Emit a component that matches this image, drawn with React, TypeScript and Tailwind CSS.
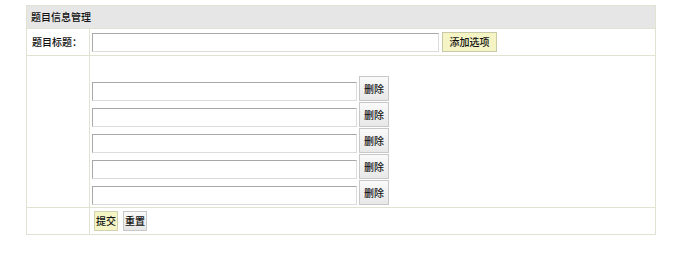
const font = { fontFamily: '"Noto Sans CJK SC", "Noto Sans", sans-serif' }

const inputCls =
  "h-[19px] border border-t-[#a8a8a8] border-l-[#a8a8a8] border-r-[#dcdcdc] border-b-[#dcdcdc] bg-white outline-none"

export default function App() {
  const options = [0, 1, 2, 3, 4]

  return (
    <div className="h-[260px] w-[692px] bg-white pt-[5px] pl-[26px] text-[10px] font-medium leading-none text-[#111]" style={font}>
      <table className="w-[630px] border-collapse">
        <tbody>
          <tr className="h-[23px] bg-[#e6e6e6]">
            <td colSpan={2} className="border border-[#e2e2d2] pl-[4px] align-middle">
              题目信息管理
            </td>
          </tr>
          <tr className="h-[27px]">
            <td className="w-[63px] border border-[#e2e2d2] pr-[7px] text-right align-middle">题目标题：</td>
            <td className="border border-[#e2e2d2] pl-[2px] align-middle">
              <div className="flex items-center gap-[3px]">
                <input className={`${inputCls} w-[347px]`} />
                <button className="h-[20px] w-[55px] border border-[#c9c9a6] bg-[#f4f4c4] text-[10px]">添加选项</button>
              </div>
            </td>
          </tr>
          <tr className="h-[152px]">
            <td className="border border-[#e2e2d2]"></td>
            <td className="border border-[#e2e2d2] pl-[2px] pt-[20px] pb-[2px] align-top">
              <div className="flex flex-col gap-[1px]">
                {options.map(i => (
                  <div key={i} className="flex items-end gap-[2px]">
                    <input className={`${inputCls} w-[265px]`} />
                    <button className="h-[25px] w-[30px] border border-[#c8c8c8] bg-gradient-to-b from-[#fafafa] to-[#e8e8e8] text-[10px]">
                      删除
                    </button>
                  </div>
                ))}
              </div>
            </td>
          </tr>
          <tr className="h-[27px]">
            <td className="border border-[#e2e2d2]"></td>
            <td className="border border-[#e2e2d2] pl-[4px] align-middle">
              <div className="flex items-center gap-[5px]">
                <button className="h-[20px] w-[24px] border border-[#d2d2b0] bg-[#f4f4c4] text-[10px]">提交</button>
                <button className="h-[20px] w-[24px] border border-[#c8c8c8] bg-gradient-to-b from-[#fafafa] to-[#e6e6e6] text-[10px]">
                  重置
                </button>
              </div>
            </td>
          </tr>
        </tbody>
      </table>
    </div>
  )
}
